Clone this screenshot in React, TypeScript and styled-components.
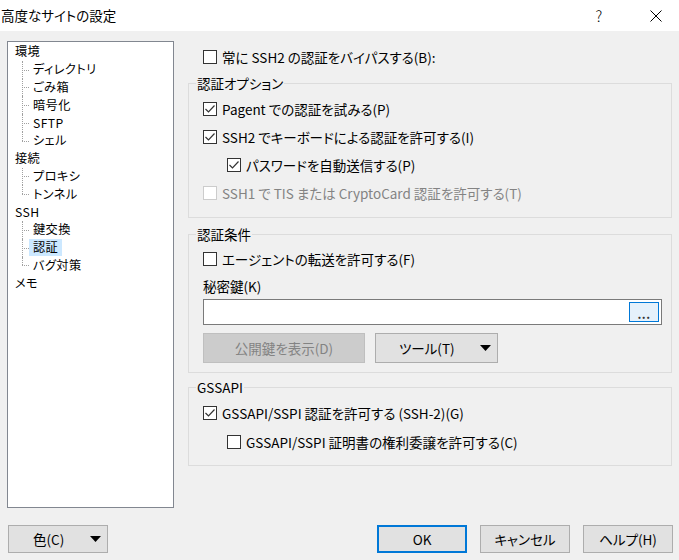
import React from "react";
import styled, { createGlobalStyle } from "styled-components";

const GlobalStyle = createGlobalStyle`
  html, body {
    margin: 0;
    padding: 0;
    background: #f0f0f0;
  }
  body {
    font-family: "Noto Sans CJK JP", "Noto Sans", sans-serif;
    font-size: 13.5px;
    color: #000;
    font-feature-settings: "palt";
  }
`;

const Window = styled.div`
  width: 679px;
  height: 560px;
  display: flex;
  flex-direction: column;
  background: #f0f0f0;
  overflow: hidden;
`;

const TitleBar = styled.div`
  height: 31px;
  flex-shrink: 0;
  background: #fff;
  display: flex;
  align-items: center;
`;

const Title = styled.div`
  flex: 1;
  padding-left: 1px;
  line-height: 31px;
`;

const CaptionButton = styled.div`
  width: 46px;
  height: 31px;
  display: flex;
  align-items: center;
  justify-content: center;
  font-size: 15px;
  font-weight: 300;
  & + & {
    margin-left: 11px;
  }
`;

const Main = styled.div`
  display: flex;
  padding: 10px 0 0 7px;
`;

const Tree = styled.ul`
  list-style: none;
  margin: 0;
  padding: 1px 0 0 7px;
  width: 167px;
  height: 467px;
  box-sizing: border-box;
  background: #fff;
  border: 1px solid #828790;
  font-size: 12.2px;
  letter-spacing: 0.4px;
`;

const TreeRow = styled.li<{ $child?: boolean }>`
  height: 17.8px;
  display: flex;
  align-items: center;
  padding-left: ${(p) => (p.$child ? "7px" : "0")};
`;

const Connector = styled.span<{ $last?: boolean }>`
  position: relative;
  align-self: stretch;
  width: 7px;
  flex-shrink: 0;
  &::before {
    content: "";
    position: absolute;
    left: 0;
    top: 0;
    bottom: ${(p) => (p.$last ? "50%" : "0")};
    border-left: 1px dotted #a0a0a0;
  }
  &::after {
    content: "";
    position: absolute;
    left: 0;
    right: 0;
    top: 50%;
    border-top: 1px dotted #a0a0a0;
  }
`;

const TreeLabel = styled.span<{ $child?: boolean; $selected?: boolean }>`
  display: inline-block;
  height: 17px;
  line-height: 17px;
  padding: ${(p) => (p.$child ? "0 4px" : "0")};
  background: ${(p) => (p.$selected ? "#cce8ff" : "transparent")};
  white-space: nowrap;
`;

const Content = styled.div`
  margin-left: 14px;
  width: 484px;
  padding-top: 7px;
  display: flex;
  flex-direction: column;
`;

const CheckRow = styled.label<{ $indent?: number; $disabled?: boolean }>`
  height: 18px;
  display: flex;
  align-items: center;
  gap: 5px;
  padding-left: ${(p) => p.$indent ?? 0}px;
  color: ${(p) => (p.$disabled ? "#838383" : "#000")};
  white-space: nowrap;
`;

const CheckText = styled.span`
  line-height: 18px;
`;

const Box = styled.span<{ $disabled?: boolean }>`
  width: 14px;
  height: 14px;
  box-sizing: border-box;
  flex-shrink: 0;
  background: #fff;
  border: 1px solid ${(p) => (p.$disabled ? "#cccccc" : "#333333")};
  display: flex;
  align-items: center;
  justify-content: center;
`;

const Group = styled.fieldset<{ $mt: number }>`
  margin: ${(p) => p.$mt}px 0 0 0;
  padding: 0;
  border: 1px solid #dcdcdc;
  min-inline-size: 0;
`;

const Legend = styled.legend`
  margin-left: 7px;
  padding: 0 1px;
  line-height: 16px;
`;

const GroupBody = styled.div<{ $pt: number; $pb: number; $gap?: number }>`
  display: flex;
  flex-direction: column;
  gap: ${(p) => p.$gap ?? 0}px;
  padding: ${(p) => p.$pt}px 10px ${(p) => p.$pb}px 14px;
`;

const FieldLabel = styled.div`
  margin-top: 10px;
  line-height: 16px;
`;

const TextField = styled.div`
  margin-top: 5px;
  width: 459px;
  height: 26px;
  box-sizing: border-box;
  background: #fff;
  border: 1px solid #7a7a7a;
  display: flex;
  justify-content: flex-end;
  padding: 2px;
`;

const BrowseButton = styled.div`
  width: 30px;
  height: 20px;
  box-sizing: border-box;
  border: 1px solid #0078d7;
  background: #e5f1fb;
  display: flex;
  align-items: flex-end;
  justify-content: center;
  font-size: 12px;
  font-weight: bold;
  color: #333;
  line-height: 14px;
  letter-spacing: 0.5px;
`;

const ButtonRow = styled.div`
  margin-top: 8px;
  display: flex;
  gap: 10px;
`;

const Button = styled.div<{ $width: number; $height?: number; $disabled?: boolean; $default?: boolean }>`
  width: ${(p) => p.$width}px;
  height: ${(p) => p.$height ?? 28}px;
  box-sizing: border-box;
  display: flex;
  align-items: center;
  justify-content: center;
  background: ${(p) => (p.$disabled ? "#cccccc" : "#e1e1e1")};
  border: ${(p) =>
    p.$default ? "2px solid #0078d7" : p.$disabled ? "1px solid #bfbfbf" : "1px solid #adadad"};
  color: ${(p) => (p.$disabled ? "#838383" : "#000")};
  white-space: nowrap;
`;

const SplitButton = styled(Button)<{ $textLeft: number }>`
  justify-content: space-between;
  padding: 0 6px 0 ${(p) => p.$textLeft}px;
`;

const Footer = styled.div`
  margin-top: 17px;
  padding: 0 6px 0 8px;
  display: flex;
  align-items: center;
`;

const Spacer = styled.div`
  flex: 1;
`;

const DialogButtons = styled.div`
  display: flex;
  gap: 13px;
`;

function Check({ checked, disabled }: { checked?: boolean; disabled?: boolean }) {
  return (
    <Box $disabled={disabled}>
      {checked && (
        <svg width="12" height="12" viewBox="0 0 12 12">
          <polyline points="1.5,6 4.5,9 10.5,2.5" fill="none" stroke="#333" strokeWidth="1.2" />
        </svg>
      )}
    </Box>
  );
}

function Option({
  label,
  checked,
  disabled,
  indent,
}: {
  label: string;
  checked?: boolean;
  disabled?: boolean;
  indent?: number;
}) {
  return (
    <CheckRow $indent={indent} $disabled={disabled}>
      <Check checked={checked} disabled={disabled} />
      <CheckText>{label}</CheckText>
    </CheckRow>
  );
}

const Arrow = () => (
  <svg width="11" height="6" viewBox="0 0 11 6">
    <polygon points="0,0 11,0 5.5,6" fill="#000" />
  </svg>
);

type Node = { label: string; children?: string[] };

const tree: Node[] = [
  { label: "環境", children: ["ディレクトリ", "ごみ箱", "暗号化", "SFTP", "シェル"] },
  { label: "接続", children: ["プロキシ", "トンネル"] },
  { label: "SSH", children: ["鍵交換", "認証", "バグ対策"] },
  { label: "メモ" },
];

export default function App() {
  return (
    <Window>
      <GlobalStyle />
      <TitleBar>
        <Title>高度なサイトの設定</Title>
        <CaptionButton>?</CaptionButton>
        <CaptionButton>
          <svg width="12" height="12" viewBox="0 0 12 12">
            <path d="M0.5 0.5 L11.5 11.5 M11.5 0.5 L0.5 11.5" stroke="#000" strokeWidth="1" />
          </svg>
        </CaptionButton>
      </TitleBar>

      <Main>
        <Tree>
          {tree.map((node) => (
            <React.Fragment key={node.label}>
              <TreeRow>
                <TreeLabel>{node.label}</TreeLabel>
              </TreeRow>
              {node.children?.map((child, i) => (
                <TreeRow key={child} $child>
                  <Connector $last={i === node.children!.length - 1} />
                  <TreeLabel $child $selected={child === "認証"}>
                    {child}
                  </TreeLabel>
                </TreeRow>
              ))}
            </React.Fragment>
          ))}
        </Tree>

        <Content>
          <Option indent={15} label="常に SSH2 の認証をバイパスする(B):" />

          <Group $mt={9}>
            <Legend>認証オプション</Legend>
            <GroupBody $pt={9} $pb={15} $gap={10}>
              <Option checked label="Pagent での認証を試みる(P)" />
              <Option checked label="SSH2 でキーボードによる認証を許可する(I)" />
              <Option checked indent={24} label="パスワードを自動送信する(P)" />
              <Option disabled label="SSH1 で TIS または CryptoCard 認証を許可する(T)" />
            </GroupBody>
          </Group>

          <Group $mt={8}>
            <Legend>認証条件</Legend>
            <GroupBody $pt={8} $pb={9}>
              <Option label="エージェントの転送を許可する(F)" />
              <FieldLabel>秘密鍵(K)</FieldLabel>
              <TextField>
                <BrowseButton>...</BrowseButton>
              </TextField>
              <ButtonRow>
                <Button $width={162} $height={30} $disabled>
                  公開鍵を表示(D)
                </Button>
                <SplitButton $width={123} $height={30} $textLeft={23}>
                  <span>ツール(T)</span>
                  <Arrow />
                </SplitButton>
              </ButtonRow>
            </GroupBody>
          </Group>

          <Group $mt={6}>
            <Legend>GSSAPI</Legend>
            <GroupBody $pt={9} $pb={14} $gap={11}>
              <Option checked label="GSSAPI/SSPI 認証を許可する (SSH-2)(G)" />
              <Option indent={24} label="GSSAPI/SSPI 証明書の権利委譲を許可する(C)" />
            </GroupBody>
          </Group>
        </Content>
      </Main>

      <Footer>
        <SplitButton $width={100} $textLeft={24}>
          <span>色(C)</span>
          <Arrow />
        </SplitButton>
        <Spacer />
        <DialogButtons>
          <Button $width={90} $default>
            OK
          </Button>
          <Button $width={90}>キャンセル</Button>
          <Button $width={90}>ヘルプ(H)</Button>
        </DialogButtons>
      </Footer>
    </Window>
  );
}
